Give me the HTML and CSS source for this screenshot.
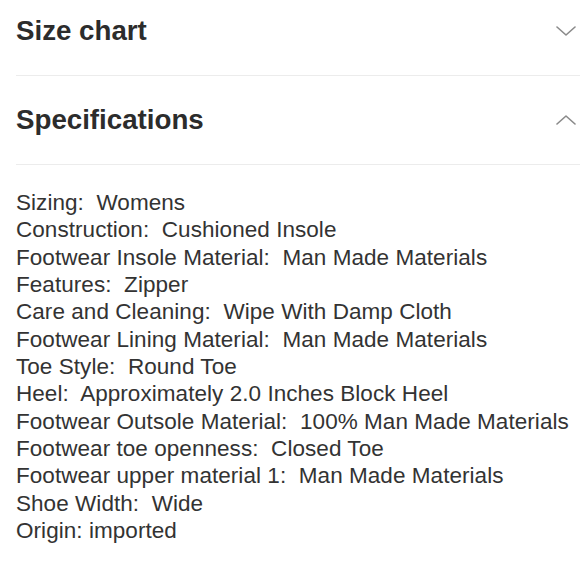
FILE: index.html
```html
<!DOCTYPE html>
<html lang="en">
<head>
<meta charset="utf-8">
<title>Specifications</title>
<link rel="stylesheet" href="styles.css">
</head>
<body>
<main class="page">
  <section class="section section-first">
    <div class="section-head">
      <h2 class="section-title">Size chart</h2>
      <svg class="chevron" width="20" height="10" viewBox="0 0 20 10" aria-hidden="true"><path d="M1 1 L10 9 L19 1" fill="none" stroke="#8a8a8a" stroke-width="1.6" stroke-linecap="round" stroke-linejoin="round"/></svg>
    </div>
  </section>
  <section class="section">
    <div class="section-head">
      <h2 class="section-title">Specifications</h2>
      <svg class="chevron" width="20" height="10" viewBox="0 0 20 10" aria-hidden="true"><path d="M1 9 L10 1 L19 9" fill="none" stroke="#8a8a8a" stroke-width="1.6" stroke-linecap="round" stroke-linejoin="round"/></svg>
    </div>
    <ul class="spec-list">
      <li>Sizing:  Womens</li>
      <li>Construction:  Cushioned Insole</li>
      <li>Footwear Insole Material:  Man Made Materials</li>
      <li>Features:  Zipper</li>
      <li>Care and Cleaning:  Wipe With Damp Cloth</li>
      <li>Footwear Lining Material:  Man Made Materials</li>
      <li>Toe Style:  Round Toe</li>
      <li>Heel:  Approximately 2.0 Inches Block Heel</li>
      <li>Footwear Outsole Material:  100% Man Made Materials</li>
      <li>Footwear toe openness:  Closed Toe</li>
      <li>Footwear upper material 1:  Man Made Materials</li>
      <li>Shoe Width:  Wide</li>
      <li>Origin: imported</li>
    </ul>
  </section>
</main>
</body>
</html>
```
FILE: styles.css
```css
html, body {
  margin: 0;
  padding: 0;
  background: #ffffff;
}

body {
  font-family: "Liberation Sans", Arial, Helvetica, sans-serif;
  color: #333333;
  overflow: hidden;
}

.page {
  padding-left: 16px;
}

.section-first {
  margin-top: -13px;
}

.section-head {
  display: flex;
  align-items: center;
  justify-content: space-between;
  height: 88px;
  border-bottom: 1px solid #ececec;
  padding-right: 4px;
}

.section-title {
  margin: 0;
  font-size: 27.7px;
  font-weight: 700;
  color: #2c2c2c;
  line-height: 1;
}

.chevron {
  display: block;
  flex: none;
}

.spec-list {
  list-style: none;
  margin: 0;
  padding: 24px 0 0 0;
  font-size: 22.5px;
  line-height: 27.33px;
  letter-spacing: 0.05px;
  color: #333333;
}

.spec-list li {
  white-space: pre;
}
```
